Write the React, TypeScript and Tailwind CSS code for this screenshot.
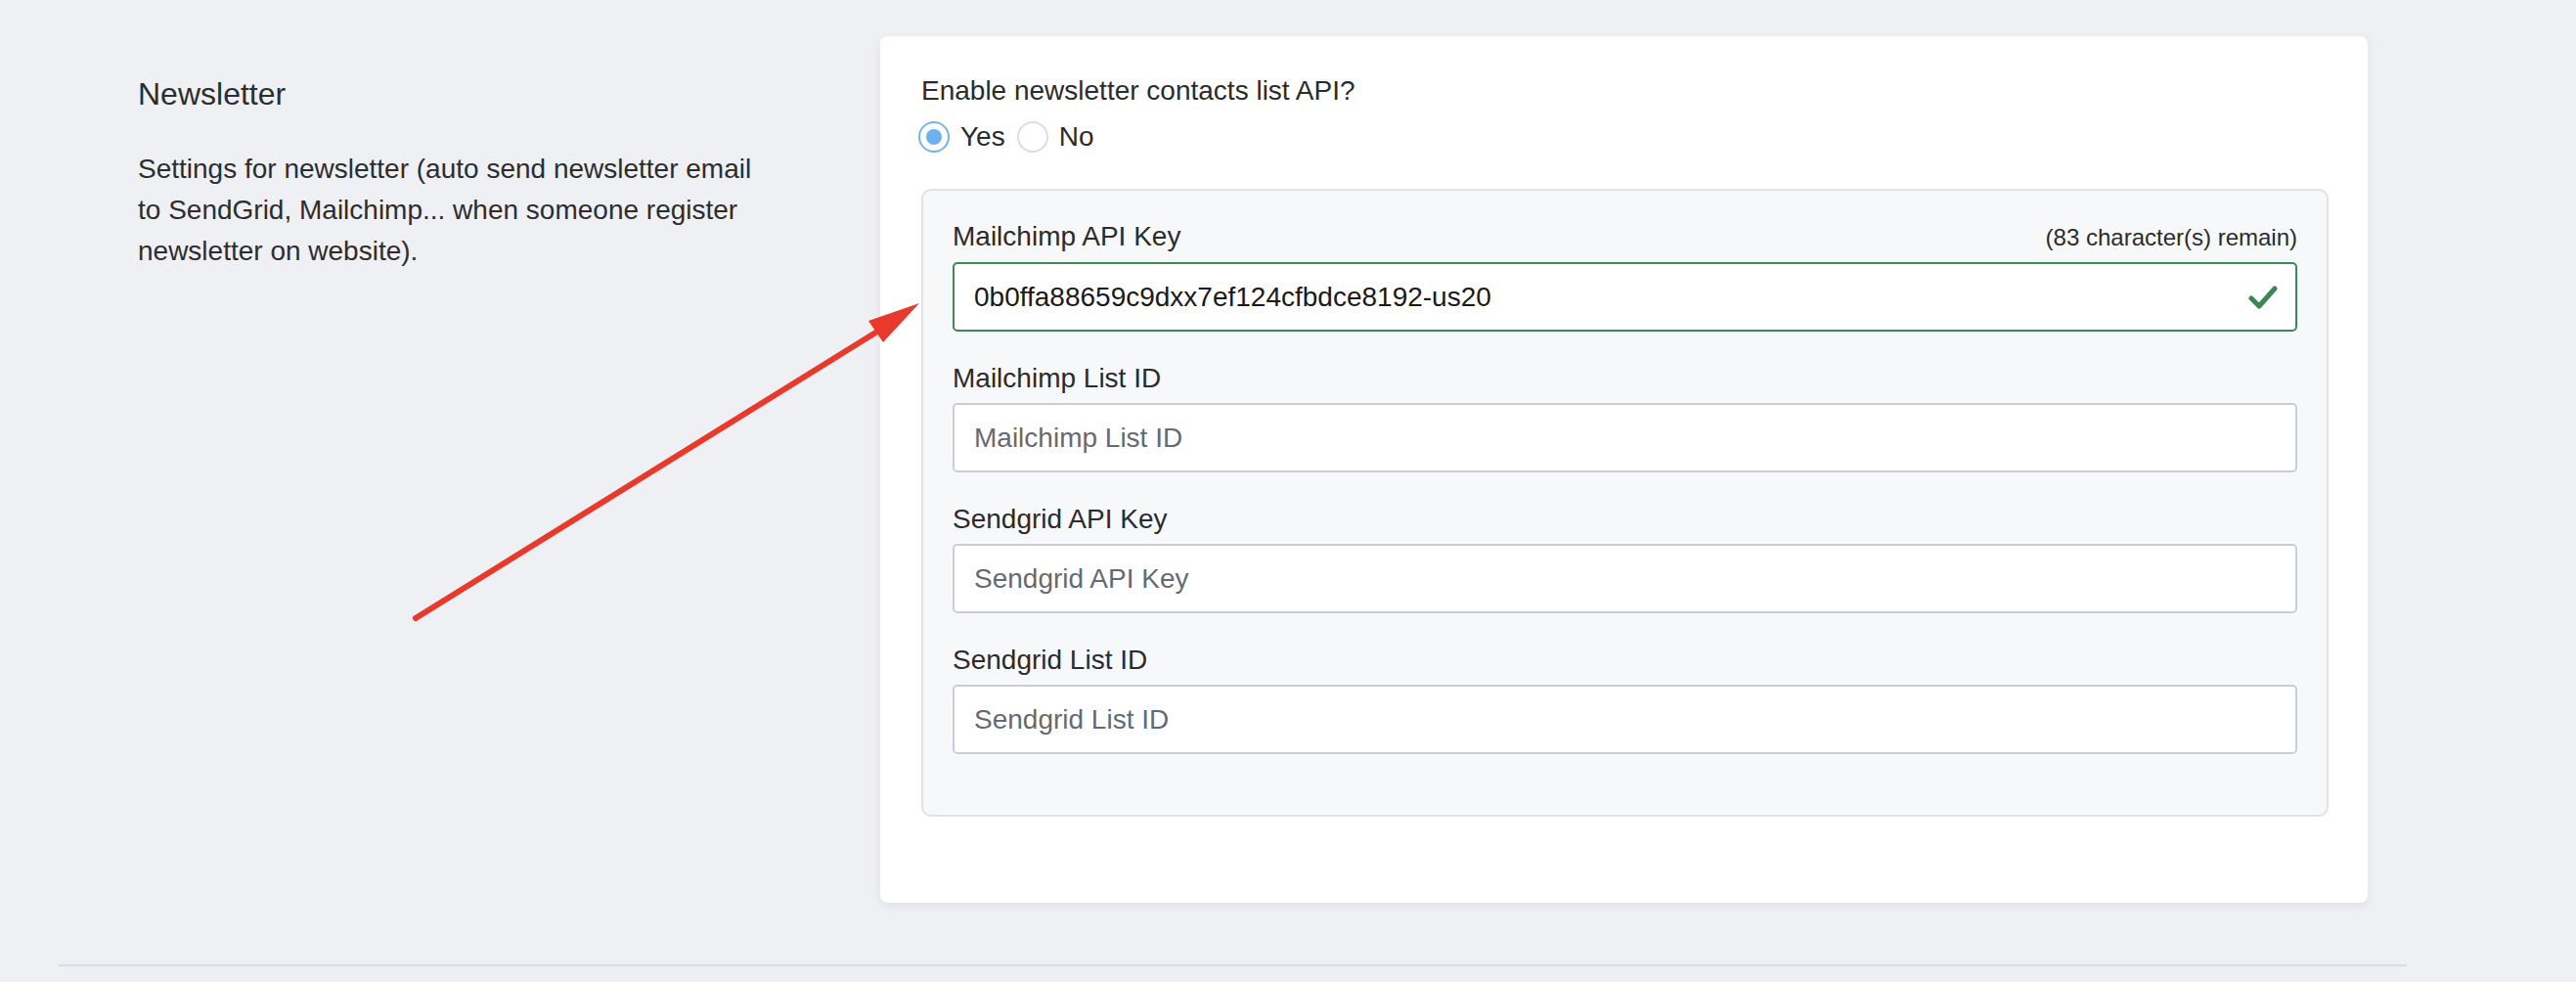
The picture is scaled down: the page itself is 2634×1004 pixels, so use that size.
import React from "react";

const fields = [
  { label: "Mailchimp List ID" },
  { label: "Sendgrid API Key" },
  { label: "Sendgrid List ID" },
];

function Radio({ checked, label }: { checked?: boolean; label: string }) {
  return (
    <label className="flex items-center">
      <span
        className={`flex h-[32px] w-[32px] items-center justify-center rounded-full border-2 bg-white ${
          checked ? "border-[#72b3f0]" : "border-[#d5dfe2]"
        }`}
      >
        {checked && <span className="h-[16px] w-[16px] rounded-full bg-[#6eb0f0]" />}
      </span>
      <span className="ml-[11px] mr-[2px] text-[28px] leading-[46px] text-[#2b2b2b]">{label}</span>
    </label>
  );
}

export default function App() {
  return (
    <div
      className="relative min-h-[1004px] w-[2634px] bg-[#eff0f4] pl-[60px] pt-[37px]"
      style={{ fontFamily: '"Liberation Sans", Arial, sans-serif' }}
    >
      <div className="flex w-[2401px]">
        {/* description column */}
        <div className="w-[800px] pl-[81px] pr-[79px] pt-[40px] text-[#2d2d2d]">
          <h3 className="text-[32px] leading-[38px]">Newsletter</h3>
          <p className="mt-[37px] text-[28px] leading-[42px]">
            Settings for newsletter (auto send newsletter email to SendGrid, Mailchimp... when someone register
            newsletter on website).
          </p>
        </div>

        {/* settings card */}
        <div className="flex-1 px-[40px]">
          <div className="h-[886px] rounded-[8px] bg-white pl-[42px] pr-[40px] pt-[35px] shadow-[0_3px_8px_rgba(30,40,60,0.08)]">
            <div className="text-[28px] leading-[42px] text-[#2b2b2b]">Enable newsletter contacts list API?</div>
            <div className="-ml-[3px] mt-[3px] flex items-center gap-[10px]">
              <Radio checked label="Yes" />
              <Radio label="No" />
            </div>

            <div className="mt-[30px] h-[642px] rounded-[10px] border-2 border-[#e0e2e8] bg-[#f7f8fa] px-[30px] pt-[26px]">
              <div className="mb-[4px] flex items-baseline justify-between text-[#2b2b2b]">
                <span className="text-[28px] leading-[42px]">Mailchimp API Key</span>
                <span className="text-[24px] leading-[42px]">(83 character(s) remain)</span>
              </div>
              <div className="relative">
                <input
                  readOnly
                  value="0b0ffa88659c9dxx7ef124cfbdce8192-us20"
                  className="block h-[71px] w-full rounded-[5px] border-2 border-[#3f8857] bg-white pl-[20px] pr-[70px] text-[28px] text-[#1a1a1a] outline-none"
                />
                <svg
                  className="absolute right-[20px] top-[24px] h-[24px] w-[30px]"
                  viewBox="0 0 30 24"
                  fill="none"
                >
                  <path
                    d="M3 13 L11 21 L27 3"
                    stroke="#3d8556"
                    strokeWidth="5"
                    strokeLinecap="round"
                    strokeLinejoin="round"
                  />
                </svg>
              </div>

              {fields.map((f) => (
                <div key={f.label} className="mt-[27px]">
                  <div className="mb-[4px] text-[28px] leading-[42px] text-[#2b2b2b]">{f.label}</div>
                  <input
                    placeholder={f.label}
                    className="block h-[71px] w-full rounded-[5px] border-2 border-[#c9ced6] bg-white px-[20px] text-[28px] text-[#1a1a1a] outline-none placeholder:text-[#666a70]"
                  />
                </div>
              ))}
            </div>
          </div>
        </div>
      </div>

      <div className="mt-[63px] h-[2px] w-[2401px] bg-[#d7dde3]" />

      {/* annotation arrow */}
      <svg className="pointer-events-none absolute left-0 top-0" width="2634" height="1004" viewBox="0 0 2634 1004">
        <line x1="425" y1="632" x2="897" y2="339" stroke="#e8392a" strokeWidth="6" strokeLinecap="round" />
        <polygon points="940,310 888,328 903,350" fill="#e8392a" />
      </svg>
    </div>
  );
}
